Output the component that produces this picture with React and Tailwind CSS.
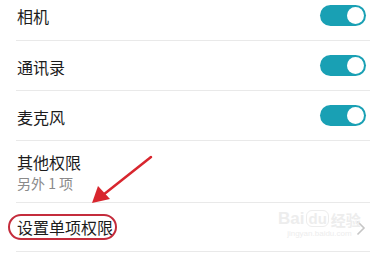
import React from "react";

const font = { fontFamily: '"Noto Sans CJK SC", "Noto Sans", sans-serif' };

function Toggle() {
  return (
    <div className="w-[46px] h-[21px] rounded-full bg-[#19a0b4] flex items-center justify-end pr-[2px]">
      <div className="w-[17px] h-[17px] rounded-full bg-white" />
    </div>
  );
}

function Sep() {
  return <div className="h-px bg-[#e9e9e9] ml-[16px] mr-[10px]" />;
}

export default function App() {
  return (
    <div
      className="relative w-[380px] h-[253px] overflow-hidden bg-white text-[#1c1c1c]"
      style={font}
    >
      <div className="flex flex-col">
        <div className="h-[40px] pb-[9px] flex items-center justify-between pl-[17px] pr-[14px]">
          <span className="text-[16px] leading-none">相机</span>
          <Toggle />
        </div>
        <Sep />
        <div className="h-[49px] flex items-center justify-between pl-[17px] pr-[14px]">
          <span className="text-[16px] leading-none mt-[3px]">通讯录</span>
          <Toggle />
        </div>
        <Sep />
        <div className="h-[49px] flex items-center justify-between pl-[17px] pr-[14px]">
          <span className="text-[16px] leading-none mt-[3px]">麦克风</span>
          <Toggle />
        </div>
        <Sep />
        <div className="h-[61px] flex flex-col justify-center pl-[17px] gap-[6px]">
          <span className="text-[16px] leading-none">其他权限</span>
          <span className="text-[14px] leading-none text-[#8a8a8a]">另外 1 项</span>
        </div>
        <Sep />
        <div className="h-[48px] flex items-center justify-between pl-[17px] pr-[14px]">
          <span className="relative text-[16px] leading-none">
            设置单项权限
            <span className="absolute left-[-9px] right-[-4px] top-[-5px] bottom-[-5px] rounded-full border-2 border-[#c42c3c]" />
          </span>
          <svg width="10" height="16" viewBox="0 0 10 16" className="mt-[1px]">
            <polyline points="1.5,1.5 8,8 1.5,14.5" fill="none" stroke="#c6c6c6" strokeWidth="1.6" />
          </svg>
        </div>
        <Sep />
      </div>

      {/* watermark */}
      <div className="absolute left-[278px] top-[210px] flex flex-col items-center text-[#ededed] pointer-events-none">
        <div className="flex items-end gap-[2px] text-[17px] leading-none font-bold" style={{ fontFamily: '"Liberation Sans", sans-serif' }}>
          <span>Bai</span>
          <span className="text-[15px] border border-[#ededed] rounded-[6px] px-[1px]">du</span>
          <span className="text-[15px]" style={font}>经验</span>
        </div>
        <span className="text-[8px] leading-none mt-[3px]" style={{ fontFamily: '"Liberation Sans", sans-serif' }}>jingyan.baidu.com</span>
      </div>

      {/* arrow annotation */}
      <svg className="absolute left-0 top-0 pointer-events-none" width="380" height="253">
        <line x1="151" y1="157" x2="103" y2="195" stroke="#d8262e" strokeWidth="2.5" strokeLinecap="round" />
        <polygon points="92,203 98,186 110,199" fill="#d8262e" />
      </svg>
    </div>
  );
}
